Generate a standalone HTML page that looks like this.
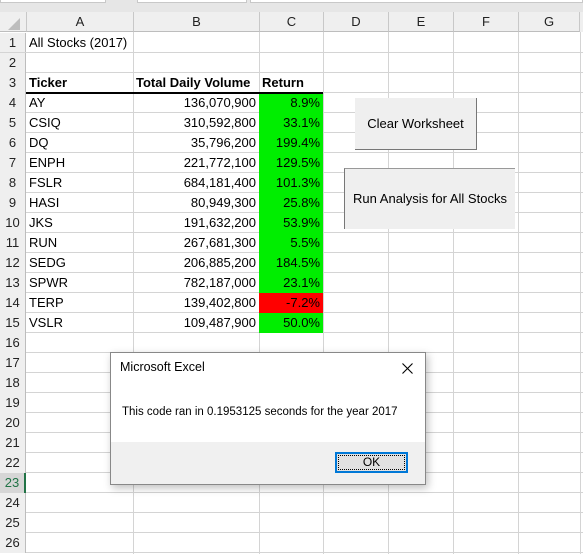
<!DOCTYPE html>
<html><head><meta charset="utf-8"><style>
*{margin:0;padding:0;box-sizing:border-box}
html,body{width:583px;height:554px;overflow:hidden}
body{background:#fff;font-family:"Liberation Sans",Calibri,sans-serif;font-size:13px;color:#000;position:relative}
.a{position:absolute}
.vl{position:absolute;top:12px;width:1px;height:542px;background:#d4d4d4}
.hl{position:absolute;left:0;width:583px;height:1px;background:#d4d4d4}
.rn{position:absolute;left:0;width:26px;height:20px;background:#efefef;text-align:center;line-height:20px;font-size:13px;color:#222;border-right:1px solid #bdbdbd}
.ch{position:absolute;top:12px;height:20px;background:#efefef;text-align:center;line-height:20px;color:#222;border-bottom:1px solid #bdbdbd}
.t{position:absolute;height:20px;line-height:20px;white-space:nowrap}
.r{text-align:right}
.g{background:#00ee00}
</style></head><body>
<div class="a" style="left:0;top:0;width:583px;height:12px;background:#e6e6e6"></div>
<div class="a" style="left:0;top:0;width:106px;height:3px;background:#fff;border:1px solid #c8c8c8;border-top:none"></div>
<div class="a" style="left:137px;top:0;width:110px;height:3px;background:#fff;border:1px solid #c8c8c8;border-top:none"></div>
<div class="a" style="left:250px;top:0;width:333px;height:3px;background:#fff;border:1px solid #c8c8c8;border-top:none"></div>
<div class="ch" style="left:0;width:26px"></div>
<div class="a" style="left:8px;top:18px;width:0;height:0;border-left:12px solid transparent;border-bottom:12px solid #bdbdbd"></div>
<div class="ch" style="left:26px;width:107px;border-left:1px solid #c8c8c8">A</div>
<div class="ch" style="left:133px;width:126px;border-left:1px solid #c8c8c8">B</div>
<div class="ch" style="left:259px;width:64px;border-left:1px solid #c8c8c8">C</div>
<div class="ch" style="left:323px;width:65px;border-left:1px solid #c8c8c8">D</div>
<div class="ch" style="left:388px;width:65px;border-left:1px solid #c8c8c8">E</div>
<div class="ch" style="left:453px;width:65px;border-left:1px solid #c8c8c8">F</div>
<div class="ch" style="left:518px;width:62px;border-left:1px solid #c8c8c8;border-right:1px solid #c8c8c8">G</div>
<div class="a" style="left:580px;top:12px;width:3px;height:20px;background:#efefef"></div>
<div class="vl" style="left:133px;top:32px"></div><div class="vl" style="left:259px;top:32px"></div><div class="vl" style="left:323px;top:32px"></div><div class="vl" style="left:388px;top:32px"></div><div class="vl" style="left:453px;top:32px"></div><div class="vl" style="left:518px;top:32px"></div><div class="vl" style="left:580px;top:32px"></div>
<div class="hl" style="top:52px"></div><div class="hl" style="top:72px"></div><div class="hl" style="top:92px"></div><div class="hl" style="top:112px"></div><div class="hl" style="top:132px"></div><div class="hl" style="top:152px"></div><div class="hl" style="top:172px"></div><div class="hl" style="top:192px"></div><div class="hl" style="top:212px"></div><div class="hl" style="top:232px"></div><div class="hl" style="top:252px"></div><div class="hl" style="top:272px"></div><div class="hl" style="top:292px"></div><div class="hl" style="top:312px"></div><div class="hl" style="top:332px"></div><div class="hl" style="top:352px"></div><div class="hl" style="top:372px"></div><div class="hl" style="top:392px"></div><div class="hl" style="top:412px"></div><div class="hl" style="top:432px"></div><div class="hl" style="top:452px"></div><div class="hl" style="top:472px"></div><div class="hl" style="top:492px"></div><div class="hl" style="top:512px"></div><div class="hl" style="top:532px"></div><div class="hl" style="top:552px"></div>
<div class="rn" style="top:33px">1</div><div class="rn" style="top:53px">2</div><div class="rn" style="top:73px">3</div><div class="rn" style="top:93px">4</div><div class="rn" style="top:113px">5</div><div class="rn" style="top:133px">6</div><div class="rn" style="top:153px">7</div><div class="rn" style="top:173px">8</div><div class="rn" style="top:193px">9</div><div class="rn" style="top:213px">10</div><div class="rn" style="top:233px">11</div><div class="rn" style="top:253px">12</div><div class="rn" style="top:273px">13</div><div class="rn" style="top:293px">14</div><div class="rn" style="top:313px">15</div><div class="rn" style="top:333px">16</div><div class="rn" style="top:353px">17</div><div class="rn" style="top:373px">18</div><div class="rn" style="top:393px">19</div><div class="rn" style="top:413px">20</div><div class="rn" style="top:433px">21</div><div class="rn" style="top:453px">22</div><div class="rn" style="top:473px;background:#d6d6d6;color:#217346;border-right:2px solid #217346">23</div><div class="rn" style="top:493px">24</div><div class="rn" style="top:513px">25</div><div class="rn" style="top:533px">26</div>
<div class="a" style="left:0;top:52px;width:26px;height:1px;background:#d4d4d4"></div>
<div class="t" style="left:29px;top:33px">All Stocks (2017)</div>
<div class="a" style="left:26px;top:92px;width:297px;height:2px;background:#000"></div>
<div class="t" style="left:29px;top:73px;font-weight:bold">Ticker</div>
<div class="t" style="left:136px;top:73px;font-weight:bold">Total Daily Volume</div>
<div class="t" style="left:262px;top:73px;font-weight:bold">Return</div>
<div class="a g" style="left:259px;top:94px;width:64px;height:239px"></div>
<div class="a" style="left:259px;top:293px;width:64px;height:20px;background:#ff0000"></div>
<div class="t" style="left:29px;top:93px">AY</div><div class="t r" style="left:133px;width:123px;top:93px">136,070,900</div><div class="t r" style="left:259px;width:61px;top:93px">8.9%</div>
<div class="t" style="left:29px;top:113px">CSIQ</div><div class="t r" style="left:133px;width:123px;top:113px">310,592,800</div><div class="t r" style="left:259px;width:61px;top:113px">33.1%</div>
<div class="t" style="left:29px;top:133px">DQ</div><div class="t r" style="left:133px;width:123px;top:133px">35,796,200</div><div class="t r" style="left:259px;width:61px;top:133px">199.4%</div>
<div class="t" style="left:29px;top:153px">ENPH</div><div class="t r" style="left:133px;width:123px;top:153px">221,772,100</div><div class="t r" style="left:259px;width:61px;top:153px">129.5%</div>
<div class="t" style="left:29px;top:173px">FSLR</div><div class="t r" style="left:133px;width:123px;top:173px">684,181,400</div><div class="t r" style="left:259px;width:61px;top:173px">101.3%</div>
<div class="t" style="left:29px;top:193px">HASI</div><div class="t r" style="left:133px;width:123px;top:193px">80,949,300</div><div class="t r" style="left:259px;width:61px;top:193px">25.8%</div>
<div class="t" style="left:29px;top:213px">JKS</div><div class="t r" style="left:133px;width:123px;top:213px">191,632,200</div><div class="t r" style="left:259px;width:61px;top:213px">53.9%</div>
<div class="t" style="left:29px;top:233px">RUN</div><div class="t r" style="left:133px;width:123px;top:233px">267,681,300</div><div class="t r" style="left:259px;width:61px;top:233px">5.5%</div>
<div class="t" style="left:29px;top:253px">SEDG</div><div class="t r" style="left:133px;width:123px;top:253px">206,885,200</div><div class="t r" style="left:259px;width:61px;top:253px">184.5%</div>
<div class="t" style="left:29px;top:273px">SPWR</div><div class="t r" style="left:133px;width:123px;top:273px">782,187,000</div><div class="t r" style="left:259px;width:61px;top:273px">23.1%</div>
<div class="t" style="left:29px;top:293px">TERP</div><div class="t r" style="left:133px;width:123px;top:293px">139,402,800</div><div class="t r" style="left:259px;width:61px;top:293px">-7.2%</div>
<div class="t" style="left:29px;top:313px">VSLR</div><div class="t r" style="left:133px;width:123px;top:313px">109,487,900</div><div class="t r" style="left:259px;width:61px;top:313px">50.0%</div>
<div class="a" style="left:355px;top:98px;width:122px;height:52px;background:#efefef;border-right:1px solid #777;border-bottom:1px solid #777;text-align:center;line-height:52px">Clear Worksheet</div>
<div class="a" style="left:344px;top:168px;width:171px;height:61px;background:#efefef;border-left:1px solid #777;border-top:1px solid #999;text-align:center;line-height:60px">Run Analysis for All Stocks</div>
<div class="a" style="left:110px;top:352px;width:316px;height:133px;background:#fff;border:1px solid #888;box-shadow:2px 3px 8px rgba(0,0,0,.25)">
<div class="a" style="left:9px;top:7px;font-size:12.5px">Microsoft Excel</div>
<svg class="a" style="left:291px;top:10px" width="11" height="11"><path d="M0.5 0.5L10.5 10.5M10.5 0.5L0.5 10.5" stroke="#000" stroke-width="1.1"/></svg>
<div class="a" style="left:11px;top:53px;font-size:11.5px">This code ran in 0.1953125 seconds for the year 2017</div>
<div class="a" style="left:0;top:89px;width:314px;height:42px;background:#f0f0f0"></div>
<div class="a" style="left:224px;top:99px;width:73px;height:21px;background:#e1e1e1;border:2px solid #0078d7;text-align:center;line-height:17px;font-size:12px"><div style="position:absolute;left:1px;top:1px;right:1px;bottom:1px;border:1px dotted #000"></div>OK</div>
</div>
</body></html>
